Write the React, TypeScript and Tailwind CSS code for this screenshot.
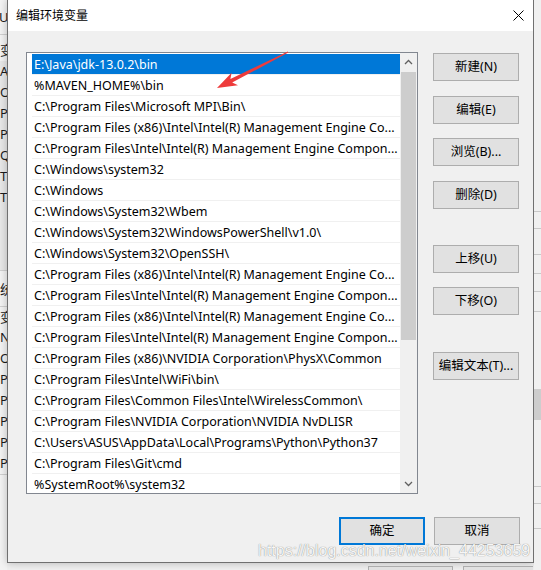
import React from 'react';

const paths = [
  'E:\\Java\\jdk-13.0.2\\bin',
  '%MAVEN_HOME%\\bin',
  'C:\\Program Files\\Microsoft MPI\\Bin\\',
  'C:\\Program Files (x86)\\Intel\\Intel(R) Management Engine Co...',
  'C:\\Program Files\\Intel\\Intel(R) Management Engine Compon...',
  'C:\\Windows\\system32',
  'C:\\Windows',
  'C:\\Windows\\System32\\Wbem',
  'C:\\Windows\\System32\\WindowsPowerShell\\v1.0\\',
  'C:\\Windows\\System32\\OpenSSH\\',
  'C:\\Program Files (x86)\\Intel\\Intel(R) Management Engine Co...',
  'C:\\Program Files\\Intel\\Intel(R) Management Engine Compon...',
  'C:\\Program Files (x86)\\Intel\\Intel(R) Management Engine Co...',
  'C:\\Program Files\\Intel\\Intel(R) Management Engine Compon...',
  'C:\\Program Files (x86)\\NVIDIA Corporation\\PhysX\\Common',
  'C:\\Program Files\\Intel\\WiFi\\bin\\',
  'C:\\Program Files\\Common Files\\Intel\\WirelessCommon\\',
  'C:\\Program Files\\NVIDIA Corporation\\NVIDIA NvDLISR',
  'C:\\Users\\ASUS\\AppData\\Local\\Programs\\Python\\Python37',
  'C:\\Program Files\\Git\\cmd',
  '%SystemRoot%\\system32',
];

// scraps of the window behind the dialog, left edge
const behindTop = ['AV', 'Or', 'Pa', 'Py', 'QT', 'TE', 'TN'];
const behindBottom = ['NV', 'OS', 'Pa', 'PA', 'PF', 'PF', 'PF'];

const Btn: React.FC<{ label: string; className?: string; primary?: boolean }> = ({ label, className = '', primary }) => (
  <button
    className={`w-[86px] h-[28px] bg-[#e1e1e1] text-[12.5px] text-black flex items-center justify-center ${
      primary ? 'border-2 border-[#0078d7]' : 'border border-[#adadad]'
    } ${className}`}
  >
    {label}
  </button>
);

function Scrollbar() {
  return (
    <div className="w-[17px] h-full flex flex-col bg-[#f0f0f0]">
      <div className="h-[18px] flex items-center justify-center">
        <svg width="9" height="6" viewBox="0 0 9 6">
          <path d="M1 5 L4.5 1.5 L8 5" fill="none" stroke="#606060" strokeWidth="1.3" />
        </svg>
      </div>
      <div className="mt-[1px] mx-[1px] h-[268px] bg-[#cdcdcd]" />
      <div className="flex-1" />
      <div className="h-[18px] flex items-center justify-center">
        <svg width="9" height="6" viewBox="0 0 9 6">
          <path d="M1 1 L4.5 4.5 L8 1" fill="none" stroke="#606060" strokeWidth="1.3" />
        </svg>
      </div>
    </div>
  );
}

function PathList() {
  return (
    <div className="w-[392px] h-[442px] border border-[#828790] bg-white flex text-[12.5px]">
      <div className="w-[373px] h-full overflow-hidden pl-[5px] pt-[1px]">
        {paths.map((p, i) => (
          <div
            key={i}
            className={`h-[21px] border-b border-[#f0f0f0] pl-[2px] leading-[22px] whitespace-nowrap overflow-hidden ${
              i === 0 ? 'bg-[#0078d7] text-white' : 'text-black'
            }`}
          >
            {p}
          </div>
        ))}
      </div>
      <Scrollbar />
    </div>
  );
}

function Dialog() {
  return (
    <div className="w-[527px] h-[563px] border-x border-b border-[#707070] flex flex-col bg-[#f0f0f0] shadow-[0_0_8px_rgba(0,0,0,0.25)]">
      <div className="h-[31px] bg-white flex items-center justify-between pl-[8px] pr-[9px] shrink-0">
        <span className="text-[12px] text-black">编辑环境变量</span>
        <svg width="11" height="11" viewBox="0 0 11 11">
          <path d="M0.5 0.5 L10.5 10.5 M10.5 0.5 L0.5 10.5" stroke="#000" strokeWidth="1" />
        </svg>
      </div>

      <div className="flex pl-[18px] pt-[21px]">
        <PathList />
        <div className="ml-[15px] pt-[1px] flex flex-col">
          <Btn label="新建(N)" />
          <Btn label="编辑(E)" className="mt-[15px]" />
          <Btn label="浏览(B)..." className="mt-[14px]" />
          <Btn label="删除(D)" className="mt-[15px]" />
          <Btn label="上移(U)" className="mt-[36px]" />
          <Btn label="下移(O)" className="mt-[14px]" />
          <Btn label="编辑文本(T)..." className="mt-[37px]" />
        </div>
      </div>

      <div className="flex justify-end gap-[9px] pr-[13px] mt-[23px]">
        <Btn label="确定" primary />
        <Btn label="取消" />
      </div>
    </div>
  );
}

export default function App() {
  return (
    <div className="relative w-[541px] h-[570px] overflow-hidden bg-[#f0f0f0] flex font-['Noto_Sans','Noto_Sans_CJK_SC',sans-serif]">
      {/* window behind, left edge */}
      <div className="w-[7px] h-full overflow-hidden text-[13px] text-[#1a1a1a] whitespace-nowrap flex flex-col bg-[#f3f3f3]">
        <div className="h-[35px] leading-[35px] border-b border-[#d0d0d0] -ml-[1px]">UI</div>
        <div className="h-[26px] leading-[26px] pt-[2px]">变量</div>
        <div className="bg-[#e8e8e8] flex flex-col">
          {behindTop.map((t, i) => (
            <div key={i} className="h-[21px] leading-[21px]">{t}</div>
          ))}
        </div>
        <div className="h-[63px] bg-[#e8e8e8] border-b border-[#d0d0d0]" />
        <div className="h-[36px] leading-[36px] border-b border-[#d0d0d0]">统计</div>
        <div className="h-[20px] leading-[20px]">变量</div>
        {behindBottom.map((t, i) => (
          <div key={i} className="h-[21px] leading-[21px]">{t}</div>
        ))}
        <div className="border-t border-[#d0d0d0] flex-1" />
      </div>

      <div className="flex flex-col">
        <Dialog />
        <div className="relative h-[7px] flex items-end">
          <div className="ml-[361px] w-[85px] h-[4px] border-t border-x border-[#adadad] bg-[#e1e1e1]" />
          <div className="ml-[10px] w-[70px] h-[4px] border-t border-l border-[#adadad] bg-[#e1e1e1]" />
        </div>
      </div>

      {/* window behind, right edge */}
      <div className="flex-1 h-full flex flex-col bg-[#f0f0f0]">
        <div className="h-[212px] border-b border-[#c8c8c8]" />
        <div className="h-[17px] border-b border-[#c8c8c8]" />
        <div className="h-[26px] border-b border-[#c8c8c8]" />
        <div className="h-[19px] border-b border-[#c8c8c8]" />
        <div className="h-[18px] border-b border-[#c8c8c8]" />
        <div className="h-[20px] border-b border-[#c8c8c8]" />
        <div className="h-[77px]" />
        <div className="h-[31px] bg-[#cdcdcd]" />
        <div className="h-[67px] border-b border-[#c8c8c8]" />
        <div className="h-[17px] border-b border-[#c8c8c8]" />
        <div className="h-[25px] border-b border-[#c8c8c8]" />
      </div>

      {/* red annotation arrow */}
      <svg className="absolute left-0 top-0 pointer-events-none" width="541" height="570" viewBox="0 0 541 570">
        <polygon
          points="217,88 238,85.2 232.2,82.6 288.3,52.6 287.7,51.4 230.4,79 231.6,72.8"
          fill="#ee3b3b"
        />
      </svg>

      {/* blog watermark */}
      <div className="absolute left-[258px] top-[541px] text-[16px] leading-[20px] font-['Liberation_Sans',sans-serif] text-[#f6f6f6] [text-shadow:0_0_1px_rgba(0,0,0,0.55)] whitespace-nowrap pointer-events-none">
        https://blog.csdn.net/weixin_44253659
      </div>
    </div>
  );
}
